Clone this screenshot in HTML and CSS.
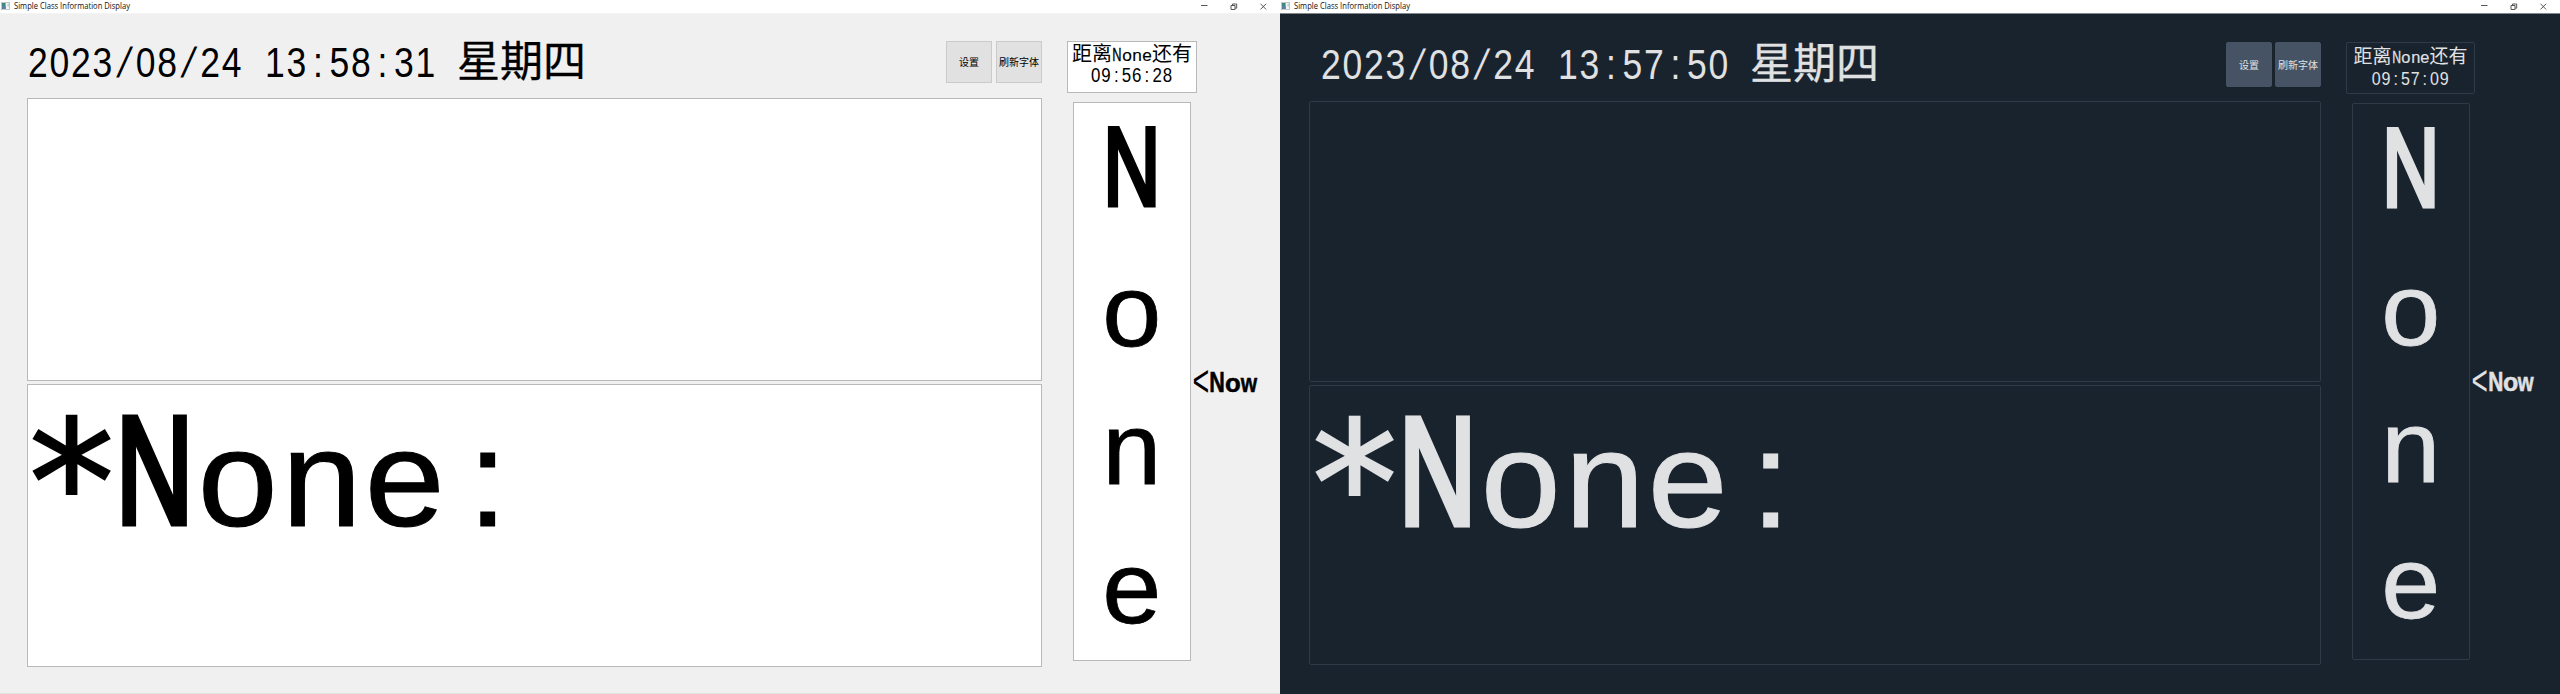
FILE: index.html
```html
<!DOCTYPE html>
<html lang="zh-CN">
<head>
<meta charset="utf-8">
<title>Simple Class Information Display</title>
<link rel="stylesheet" href="styles.css">
</head>
<body>
<section class="window light">
  <header class="titlebar">
    <svg class="app-icon" viewBox="0 0 9 8"><rect x=".4" y=".4" width="8.2" height="7.2" fill="#f4f6f6" stroke="#b5bcbf" stroke-width=".8"/><rect x="1" y="1" width="3.6" height="6" fill="#3d8a80"/><rect x="1" y="4" width="3.6" height="3" fill="#5a7fa0"/><rect x="6.6" y="1.5" width="1.2" height="3" fill="#a9cbb9"/></svg>
    <h1 class="title">Simple Class Information Display</h1>
    <svg class="controls" viewBox="0 0 66 7"><path d="M0 2.5h6.500M30 2.500h4v4h-4zM31.500 2.500v-1.500h4.200v4.200h-1.500M59.500 .8l5.600 5.600M65.100 .8l-5.600 5.600" /></svg>
  </header>
  <div class="content">
    <main class="board">
      <div class="toolbar">
        <div class="clock"><span class="num">2023<b><i>/</i></b>08<b><i>/</i></b>24<b> </b>13<b>:</b>58<b>:</b>31</span><span class="week">星期四</span></div>
        <button class="btn">设置</button>
        <button class="btn">刷新字体</button>
      </div>
      <div class="panel"></div>
      <div class="panel lesson"><span class="st">*</span><span class="uc">N</span><span class="lc">o</span><span class="lc">n</span><span class="lc">e</span><span class="lc">:</span></div>
    </main>
    <aside class="side">
      <div class="countdown">
        <div class="until">距离<span class="uc">N</span><span class="lc">o</span><span class="lc">n</span><span class="lc">e</span>还有</div>
        <div class="left"><span class="num">09<b>:</b>56<b>:</b>28</span></div>
      </div>
      <div class="schedule">
        <div class="row"><span class="uc">N</span></div>
        <div class="row"><span class="lc">o</span></div>
        <div class="row"><span class="lc">n</span></div>
        <div class="row"><span class="lc">e</span></div>
      </div>
    </aside>
    <div class="now"><span class="lt">&lt;</span><span class="uc">N</span><span class="lc">o</span><span class="lc w">w</span></div>
  </div>
</section>
<section class="window dark">
  <header class="titlebar">
    <svg class="app-icon" viewBox="0 0 9 8"><rect x=".4" y=".4" width="8.2" height="7.2" fill="#f4f6f6" stroke="#b5bcbf" stroke-width=".8"/><rect x="1" y="1" width="3.6" height="6" fill="#3d8a80"/><rect x="1" y="4" width="3.6" height="3" fill="#5a7fa0"/><rect x="6.6" y="1.5" width="1.2" height="3" fill="#a9cbb9"/></svg>
    <h1 class="title">Simple Class Information Display</h1>
    <svg class="controls" viewBox="0 0 66 7"><path d="M0 2.5h6.500M30 2.500h4v4h-4zM31.500 2.500v-1.500h4.200v4.200h-1.500M59.500 .8l5.600 5.600M65.100 .8l-5.600 5.600" /></svg>
  </header>
  <div class="content">
    <main class="board">
      <div class="toolbar">
        <div class="clock"><span class="num">2023<b><i>/</i></b>08<b><i>/</i></b>24<b> </b>13<b>:</b>57<b>:</b>50</span><span class="week">星期四</span></div>
        <button class="btn">设置</button>
        <button class="btn">刷新字体</button>
      </div>
      <div class="panel"></div>
      <div class="panel lesson"><span class="st">*</span><span class="uc">N</span><span class="lc">o</span><span class="lc">n</span><span class="lc">e</span><span class="lc">:</span></div>
    </main>
    <aside class="side">
      <div class="countdown">
        <div class="until">距离<span class="uc">N</span><span class="lc">o</span><span class="lc">n</span><span class="lc">e</span>还有</div>
        <div class="left"><span class="num">09<b>:</b>57<b>:</b>09</span></div>
      </div>
      <div class="schedule">
        <div class="row"><span class="uc">N</span></div>
        <div class="row"><span class="lc">o</span></div>
        <div class="row"><span class="lc">n</span></div>
        <div class="row"><span class="lc">e</span></div>
      </div>
    </aside>
    <div class="now"><span class="lt">&lt;</span><span class="uc">N</span><span class="lc">o</span><span class="lc w">w</span></div>
  </div>
</section>
</body>
</html>
```
FILE: styles.css
```css
* { box-sizing: border-box; }
body {
  margin: 0;
  display: flex;
  width: 2560px;
  height: 694px;
  overflow: hidden;
  font-family: "Liberation Sans", "Noto Sans CJK SC", sans-serif;
}
.window {
  width: 1280px;
  height: 694px;
  display: flex;
  flex-direction: column;
  background: var(--bg);
  color: var(--fg);
}
.light {
  --bg: #f0f0f0; --fg: #000; --panel: #fff; --line: #b9b9b9;
  --btn: #e1e1e1; --btn-line: #cacaca; --radius: 0;
  --bar-line: #f4f4f4;
  border-bottom: 1px solid #e3e3e3;
}
.dark {
  --bg: #19232d; --fg: #e0e1e3; --panel: #19232d; --line: #2d3b48;
  --btn: #455364; --btn-line: #455364; --radius: 2px;
  --bar-line: #7f868c;
}

/* title bar */
.titlebar {
  height: 14px;
  flex: none;
  display: flex;
  align-items: flex-start;
  background: #fff;
  border-bottom: 1px solid var(--bar-line);
  padding: 0 13px 0 1px;
}
.app-icon { width: 9px; height: 8px; margin-top: 2px; }
.title {
  margin: 0 auto 0 3.5px;
  font: 400 8.5px/12px "Open Sans", "Noto Sans", sans-serif;
  color: #111;
  white-space: nowrap;
  transform: scaleX(.895);
  transform-origin: 0 0;
}
.controls { width: 66px; height: 7px; margin-top: 3px; fill: none; stroke: #444; stroke-width: .9; }

/* page grid */
.content { flex: 1; display: flex; min-height: 0; }
.light .content { padding: 27px 0 26px 27px; }
.dark .content { padding: 28px 0 29px 29px; }
.board { display: flex; flex-direction: column; gap: 3px; }
.light .board { width: 1015px; }
.dark .board { width: 1012px; }
.toolbar { display: flex; align-items: flex-start; }
.light .toolbar { height: 54px; gap: 4px; }
.dark .toolbar { height: 56px; gap: 3px; }
.clock {
  flex: 1;
  display: flex;
  font-size: 42px;
  line-height: 44px;
  white-space: nowrap;
}
.light .clock { padding-left: 1px; }
.dark .clock { padding-left: 12px; padding-top: 1px; }
.num {
  display: block;
  letter-spacing: .05em;
  transform: scaleX(.846);
  transform-origin: 0 0;
}
.num b { display: inline-flex; justify-content: center; width: .606em; font-weight: 400; }
.num i { font-style: normal; transform: skewX(-15deg); }
.clock .num { width: 429px; }
.week { font-size: 43px; line-height: 43px; -webkit-text-stroke: .3px; }
.btn {
  width: 46px;
  height: 42px;
  padding: 0;
  border: 1px solid var(--btn-line);
  border-radius: var(--radius);
  background: var(--btn);
  color: var(--fg);
  font: 400 10px/14px "Noto Sans CJK SC", sans-serif;
  white-space: nowrap;
}
.dark .btn { height: 45px; }
.panel, .countdown, .schedule {
  background: var(--panel);
  border: 1px solid var(--line);
  border-radius: var(--radius);
}
.panel { flex: 1 1 0; min-height: 0; }

/* half-width letter cells */
.uc, .lc, .st, .lt { display: inline-flex; justify-content: center; line-height: 0; }
.uc { font-size: .91em; width: .5495em; -webkit-text-stroke: .046em; transform: translateY(-.022em) scaleX(.705); }
.lc { font-size: .822em; width: .608em; -webkit-text-stroke: .008em; transform: scaleX(1.05); }
.st { font-family: "DejaVu Sans", sans-serif; font-size: 1.03em; width: .4854em; -webkit-text-stroke: .012em; transform: translateY(.097em); }
.lesson { font-size: 166.500px; line-height: 166px; white-space: nowrap; }
.light .lesson { padding-left: 2px; }
.dark .lesson { padding-left: 3px; }

/* right column */
.side { display: flex; flex-direction: column; align-items: center; }
.light .side { margin-left: 25px; width: 130px; }
.dark .side { margin-left: 25px; width: 129px; }
.countdown { width: 100%; height: 52px; text-align: center; white-space: nowrap; }
.light .countdown { font-size: 20px; }
.dark .countdown { font-size: 19px; padding-top: 2px; }
.until { line-height: 24px; }
.until .uc { -webkit-text-stroke-width: .02em; }
.left { display: flex; justify-content: center; line-height: 19px; font-size: .97em; }
.left .num { transform: scaleX(.87); transform-origin: 50% 0; }
.schedule {
  width: 118px;
  margin-top: 9px;
  height: 559px;
  font-size: 123px;
  text-align: center;
}
.dark .schedule { height: 557px; }
.row { height: 138.600px; line-height: 123px; }
.dark .row { height: 136.800px; }

.now { align-self: flex-start; font-weight: 700; white-space: nowrap; }
.light .now { font-size: 32px; line-height: 32px; margin-top: 324px; margin-left: -4px; }
.dark .now { font-size: 31px; line-height: 32px; margin-top: 323px; margin-left: -3px; }
.now .lc { transform: scaleX(.98); -webkit-text-stroke-width: .02em; }
.now .uc { transform: scaleX(.74); -webkit-text-stroke-width: .02em; }
.now .w { transform: scaleX(.8); }
.now .lt { width: .5em; font-weight: 400; transform: scale(.9, 1.4); }
```
